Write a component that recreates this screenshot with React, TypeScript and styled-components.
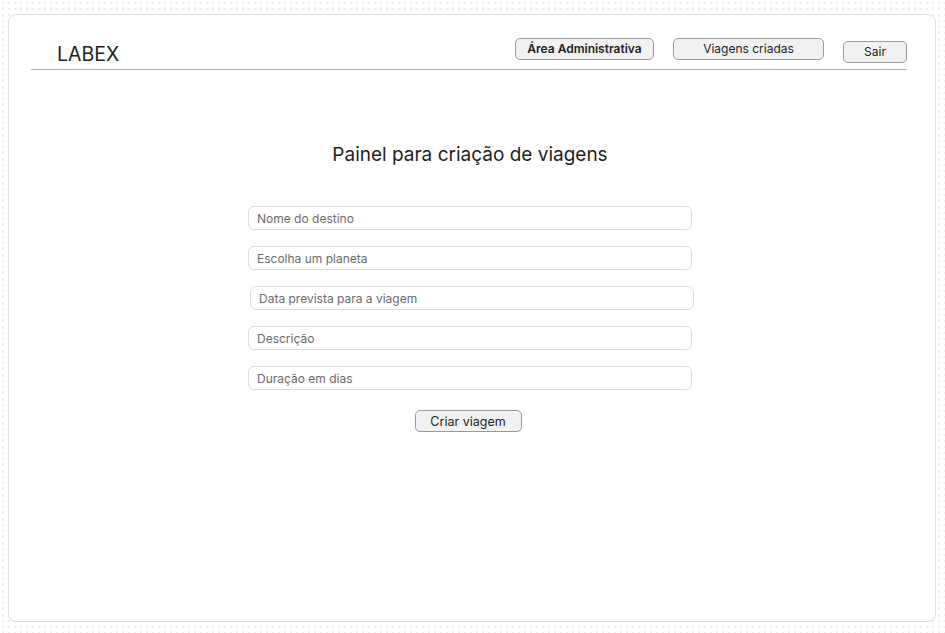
import React from "react";
import styled, { createGlobalStyle } from "styled-components";

const Global = createGlobalStyle`
  html, body {
    margin: 0;
    padding: 0;
  }
  body {
    width: 945px;
    height: 633px;
    overflow: hidden;
    font-family: Inter, "Noto Sans", "Liberation Sans", sans-serif;
    color: #1e1e1e;
    background-color: #ffffff;
    background-image: radial-gradient(circle at 3px 3px, #efefef 0.8px, transparent 1.1px);
    background-size: 6px 6px;
  }
`;

const Card = styled.div`
  box-sizing: border-box;
  width: 928px;
  height: 608px;
  margin: 14px 0 0 8px;
  background: #ffffff;
  border: 1px solid #dedede;
  border-radius: 8px;
  display: flex;
  flex-direction: column;
`;

const Header = styled.header`
  display: flex;
  align-items: flex-start;
  margin: 0 28px 0 22px;
  padding: 23px 0 3px 26px;
  border-bottom: 1.5px solid #b4b4b4;
`;

const Logo = styled.div`
  font-size: 19.5px;
  line-height: 24px;
  margin-top: 4px;
  color: #1e1e1e;
  flex: 1;
`;

const Nav = styled.nav`
  display: flex;
  align-items: flex-start;
  gap: 19px;
`;

const NavButton = styled.button<{ $w: number; $bold?: boolean; $drop?: number }>`
  box-sizing: border-box;
  width: ${(p) => p.$w}px;
  height: 22px;
  margin-top: ${(p) => p.$drop ?? 0}px;
  padding: 0;
  border: 1px solid #9a9a9a;
  border-radius: 5px;
  background: #f1f1f1;
  font-family: Inter, "Noto Sans", sans-serif;
  font-size: 12px;
  font-weight: ${(p) => (p.$bold ? 600 : 400)};
  color: #1e1e1e;
  line-height: 20px;
`;

const Main = styled.main`
  display: flex;
  flex-direction: column;
  align-items: center;
  padding-right: 4px;
`;

const Title = styled.h1`
  margin: 73px 0 39px;
  font-size: 19px;
  line-height: 24px;
  font-weight: 400;
  color: #1e1e1e;
`;

const Form = styled.form`
  display: flex;
  flex-direction: column;
  align-items: center;
  gap: 16px;
`;

const Field = styled.input<{ $shift?: number }>`
  box-sizing: border-box;
  width: 444px;
  height: 24px;
  margin-left: ${(p) => (p.$shift ?? 0) * 2}px;
  padding: 0 8px;
  border: 1px solid #dcdcdc;
  border-radius: 6px;
  background: #ffffff;
  font-family: Inter, "Noto Sans", sans-serif;
  font-size: 12px;
  color: #333;
  outline: none;
  &::placeholder {
    color: #6b6b6b;
  }
`;

const Submit = styled.button`
  box-sizing: border-box;
  width: 107px;
  height: 22px;
  margin: 4px 4px 0 0;
  padding: 0;
  border: 1px solid #9a9a9a;
  border-radius: 5px;
  background: #f1f1f1;
  font-family: Inter, "Noto Sans", sans-serif;
  font-size: 12.5px;
  color: #1e1e1e;
`;

export default function App() {
  return (
    <>
      <Global />
      <Card>
        <Header>
          <Logo>LABEX</Logo>
          <Nav>
            <NavButton $w={139} $bold>
              Área Administrativa
            </NavButton>
            <NavButton $w={151}>Viagens criadas</NavButton>
            <NavButton $w={64} $drop={3}>
              Sair
            </NavButton>
          </Nav>
        </Header>
        <Main>
          <Title>Painel para criação de viagens</Title>
          <Form onSubmit={(e) => e.preventDefault()}>
            <Field placeholder="Nome do destino" />
            <Field placeholder="Escolha um planeta" />
            <Field placeholder="Data prevista para a viagem" $shift={2} />
            <Field placeholder="Descrição" />
            <Field placeholder="Duração em dias" />
            <Submit type="submit">Criar viagem</Submit>
          </Form>
        </Main>
      </Card>
    </>
  );
}
